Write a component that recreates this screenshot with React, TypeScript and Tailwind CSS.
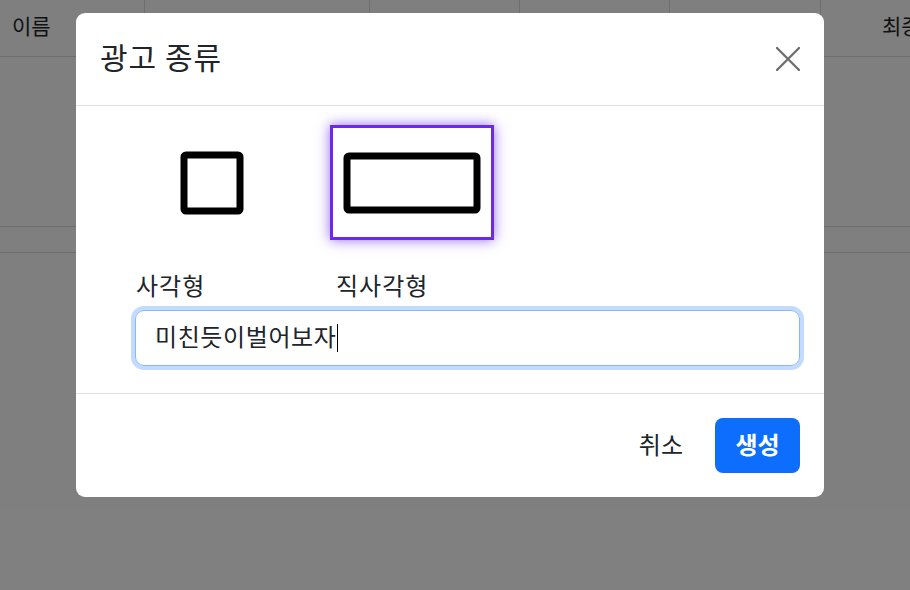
import React, { FunctionComponent, useState } from 'react'

const columns = [
  { label: '이름', width: 'w-[145px]', pad: 'pl-[12px]' },
  { label: '', width: 'w-[225px]', pad: 'pl-[12px]' },
  { label: '', width: 'w-[150px]', pad: 'pl-[12px]' },
  { label: '', width: 'w-[150px]', pad: 'pl-[12px]' },
  { label: '', width: 'w-[151px]', pad: 'pl-[12px]' },
  { label: '최종 수정일', width: 'w-[200px]', pad: 'pl-[61px]' },
]

const SquareIcon = () => (
  <svg width="64" height="64" viewBox="0 0 64 64">
    <rect x="4" y="4" width="56" height="56" rx="2" fill="none" stroke="#000" strokeWidth="7" />
  </svg>
)

const RectIcon = () => (
  <svg width="138" height="62" viewBox="0 0 138 62">
    <rect x="4" y="4" width="130" height="54" rx="2" fill="none" stroke="#000" strokeWidth="7" />
  </svg>
)

const App: FunctionComponent = () => {
  const [selected, setSelected] = useState<string>('rect')
  const [name] = useState<string>('미친듯이벌어보자')

  return (
    <div className="relative h-[590px] w-[910px] overflow-hidden bg-white font-['Noto_Sans_CJK_KR','Noto_Sans',sans-serif] text-[#212529]">
      {/* table behind the modal */}
      <div className="flex h-[57px] border-b border-[#dcdcdc]">
        {columns.map((col, i) => (
          <div
            key={i}
            className={`${col.width} ${col.pad} flex shrink-0 items-center whitespace-nowrap border-r border-[#dcdcdc] pb-[4px] text-[21px]`}
          >
            {col.label}
          </div>
        ))}
      </div>
      <div className="h-[170px] border-b border-[#dcdcdc]" />
      <div className="h-[26px] border-b border-[#dcdcdc]" />

      {/* backdrop */}
      <div className="absolute inset-0 bg-black/50" />

      {/* modal */}
      <div className="absolute left-[76px] top-[13px] w-[748px] rounded-[9px] bg-white">
        <div className="flex h-[93px] items-center justify-between border-b border-[#dee2e6] pl-[24px] pr-[24px]">
          <h5 className="pb-[6px] text-[30px] font-normal leading-none tracking-[1px] text-[#212529]">광고 종류</h5>
          <button className="flex h-[24px] w-[24px] items-center justify-center">
            <svg width="24" height="24" viewBox="0 0 24 24">
              <path d="M1 1L23 23M23 1L1 23" stroke="#707070" strokeWidth="2.4" strokeLinecap="round" />
            </svg>
          </button>
        </div>

        <div className="pb-[27px] pl-[54px] pr-[24px] pt-[19px]">
          <div className="flex gap-[36px]">
            <div
              onClick={() => setSelected('square')}
              className={`flex h-[115px] w-[164px] items-center justify-center border-[3px] ${
                selected === 'square'
                  ? 'border-[#6a2ae6] shadow-[0_0_12px_rgba(106,42,230,0.7)]'
                  : 'border-transparent'
              }`}
            >
              <SquareIcon />
            </div>
            <div
              onClick={() => setSelected('rect')}
              className={`flex h-[115px] w-[164px] items-center justify-center border-[3px] ${
                selected === 'rect'
                  ? 'border-[#6a2ae6] shadow-[0_0_12px_rgba(106,42,230,0.7)]'
                  : 'border-transparent'
              }`}
            >
              <RectIcon />
            </div>
          </div>
          <div className="mt-[30px] flex gap-[36px] pl-[6px] text-[24px] leading-[30px] tracking-[1px]">
            <span className="w-[164px]">사각형</span>
            <span className="w-[164px]">직사각형</span>
          </div>
          <div className="ml-[5px] mt-[10px] flex h-[56px] items-center rounded-[9px] border border-[#86b7fe] pb-[4px] pl-[19px] text-[24px] tracking-[0.6px] shadow-[0_0_0_4px_#c2dbfe]">
            <span>{name}</span>
            <span className="ml-[1px] mt-[4px] inline-block h-[28px] w-px bg-black" />
          </div>
        </div>

        <div className="flex h-[104px] items-center justify-end gap-[12px] border-t border-[#dee2e6] pr-[24px]">
          <button className="h-[55px] px-[20px] pb-[4px] text-[24px] text-[#212529]">취소</button>
          <button className="h-[55px] w-[85px] rounded-[8px] bg-[#0d6efd] pb-[4px] text-[24px] font-semibold text-white">
            생성
          </button>
        </div>
      </div>
    </div>
  )
}

export default App
